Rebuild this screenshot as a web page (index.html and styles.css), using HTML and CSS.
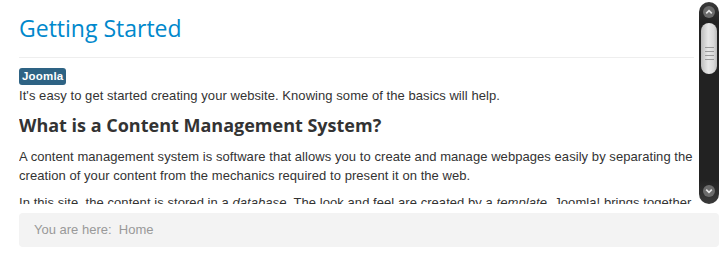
FILE: index.html
```html
<!DOCTYPE html>
<html>
<head>
<meta charset="utf-8">
<link rel="stylesheet" href="styles.css">
</head>
<body>
<div class="page">
  <div class="scroll-area">
    <div class="content">
      <h1 class="title">Getting Started</h1>
      <hr class="rule">
      <div class="tags"><span class="badge">Joomla</span></div>
      <p class="intro">It's easy to get started creating your website. Knowing some of the basics will help.</p>
      <h2 class="subtitle">What is a Content Management System?</h2>
      <p class="para">A content management system is software that allows you to create and manage webpages easily by separating the creation of your content from the mechanics required to present it on the web.</p>
      <p class="para">In this site, the content is stored in a <em>database</em>. The look and feel are created by a <em>template</em>. Joomla! brings together the template and your content to create web pages.</p>
    </div>
    <div class="scrollbar">
      <div class="sb-btn sb-up">
        <svg width="12" height="12" viewBox="0 0 12 12"><circle cx="6" cy="6" r="6" fill="#6b6b6b"/><path d="M3.2 7.4 L6 4.6 L8.8 7.4" fill="none" stroke="#e6e6e6" stroke-width="1.6"/></svg>
      </div>
      <div class="sb-track">
        <div class="sb-thumb">
          <span class="grip"></span><span class="grip"></span><span class="grip"></span><span class="grip"></span>
        </div>
      </div>
      <div class="sb-btn sb-down">
        <svg width="12" height="12" viewBox="0 0 12 12"><circle cx="6" cy="6" r="6" fill="#6b6b6b"/><path d="M3.2 4.6 L6 7.4 L8.8 4.6" fill="none" stroke="#e6e6e6" stroke-width="1.6"/></svg>
      </div>
    </div>
  </div>
  <div class="breadcrumb">You are here:&nbsp; Home</div>
</div>
</body>
</html>
```
FILE: styles.css
```css
html, body { margin: 0; padding: 0; background: #fff; }
body { font-family: "Liberation Sans", Arial, sans-serif; font-size: 13px; color: #333; }
.page { padding: 0 9px 0 19px; }
.scroll-area { display: flex; height: 204px; gap: 5px; }
.content { flex: 1; overflow: hidden; letter-spacing: 0.06px; }
.title { font-family: "Open Sans", sans-serif; font-weight: 500; font-size: 23px; color: #0088cc; margin: 0; padding-top: 12px; line-height: 32px; letter-spacing: 0; }
.rule { border: 0; border-top: 1px solid #eeeeee; margin: 13px 0 10px; }
.tags { display: flex; margin-bottom: 2px; }
.badge { display: block; background: #2e6384; color: #fff; font-weight: bold; font-size: 11.5px; line-height: 17px; padding: 0 3px; border-radius: 3px; letter-spacing: 0.2px; }
.intro { margin: 0; line-height: 18px; }
.subtitle { font-family: "Open Sans", sans-serif; font-weight: 700; font-size: 18px; line-height: 24px; margin: 8px 0 10px; color: #333; letter-spacing: 0; }
.para { margin: 0 0 8px; line-height: 19px; }
em { font-style: italic; }
.scrollbar { width: 20px; margin-top: 2px; height: 202px; border-radius: 10px; display: flex; flex-direction: column; align-items: center; background: linear-gradient(#3a3a3a, #222 20px, #222 calc(100% - 24px), #3a3a3a); }
.sb-btn { height: 16px; display: flex; align-items: center; justify-content: center; }
.sb-up { margin-top: 2px; }
.sb-down { margin-bottom: 5px; }
.sb-track { flex: 1; width: 16px; display: flex; flex-direction: column; }
.sb-thumb { margin-top: 3px; height: 51px; border-radius: 8px; background: linear-gradient(90deg, #bdbdbd, #e8e8e8 45%, #d8d8d8 80%, #bbb); display: flex; flex-direction: column; align-items: center; justify-content: center; gap: 3px; padding-top: 10px; box-sizing: border-box; }
.grip { width: 9px; height: 1px; background: #9a9a9a; }
.breadcrumb { margin-top: 9px; height: 34px; line-height: 34px; background: #f3f3f3; border-radius: 4px; padding-left: 15px; color: #999; font-size: 13px; }
```
